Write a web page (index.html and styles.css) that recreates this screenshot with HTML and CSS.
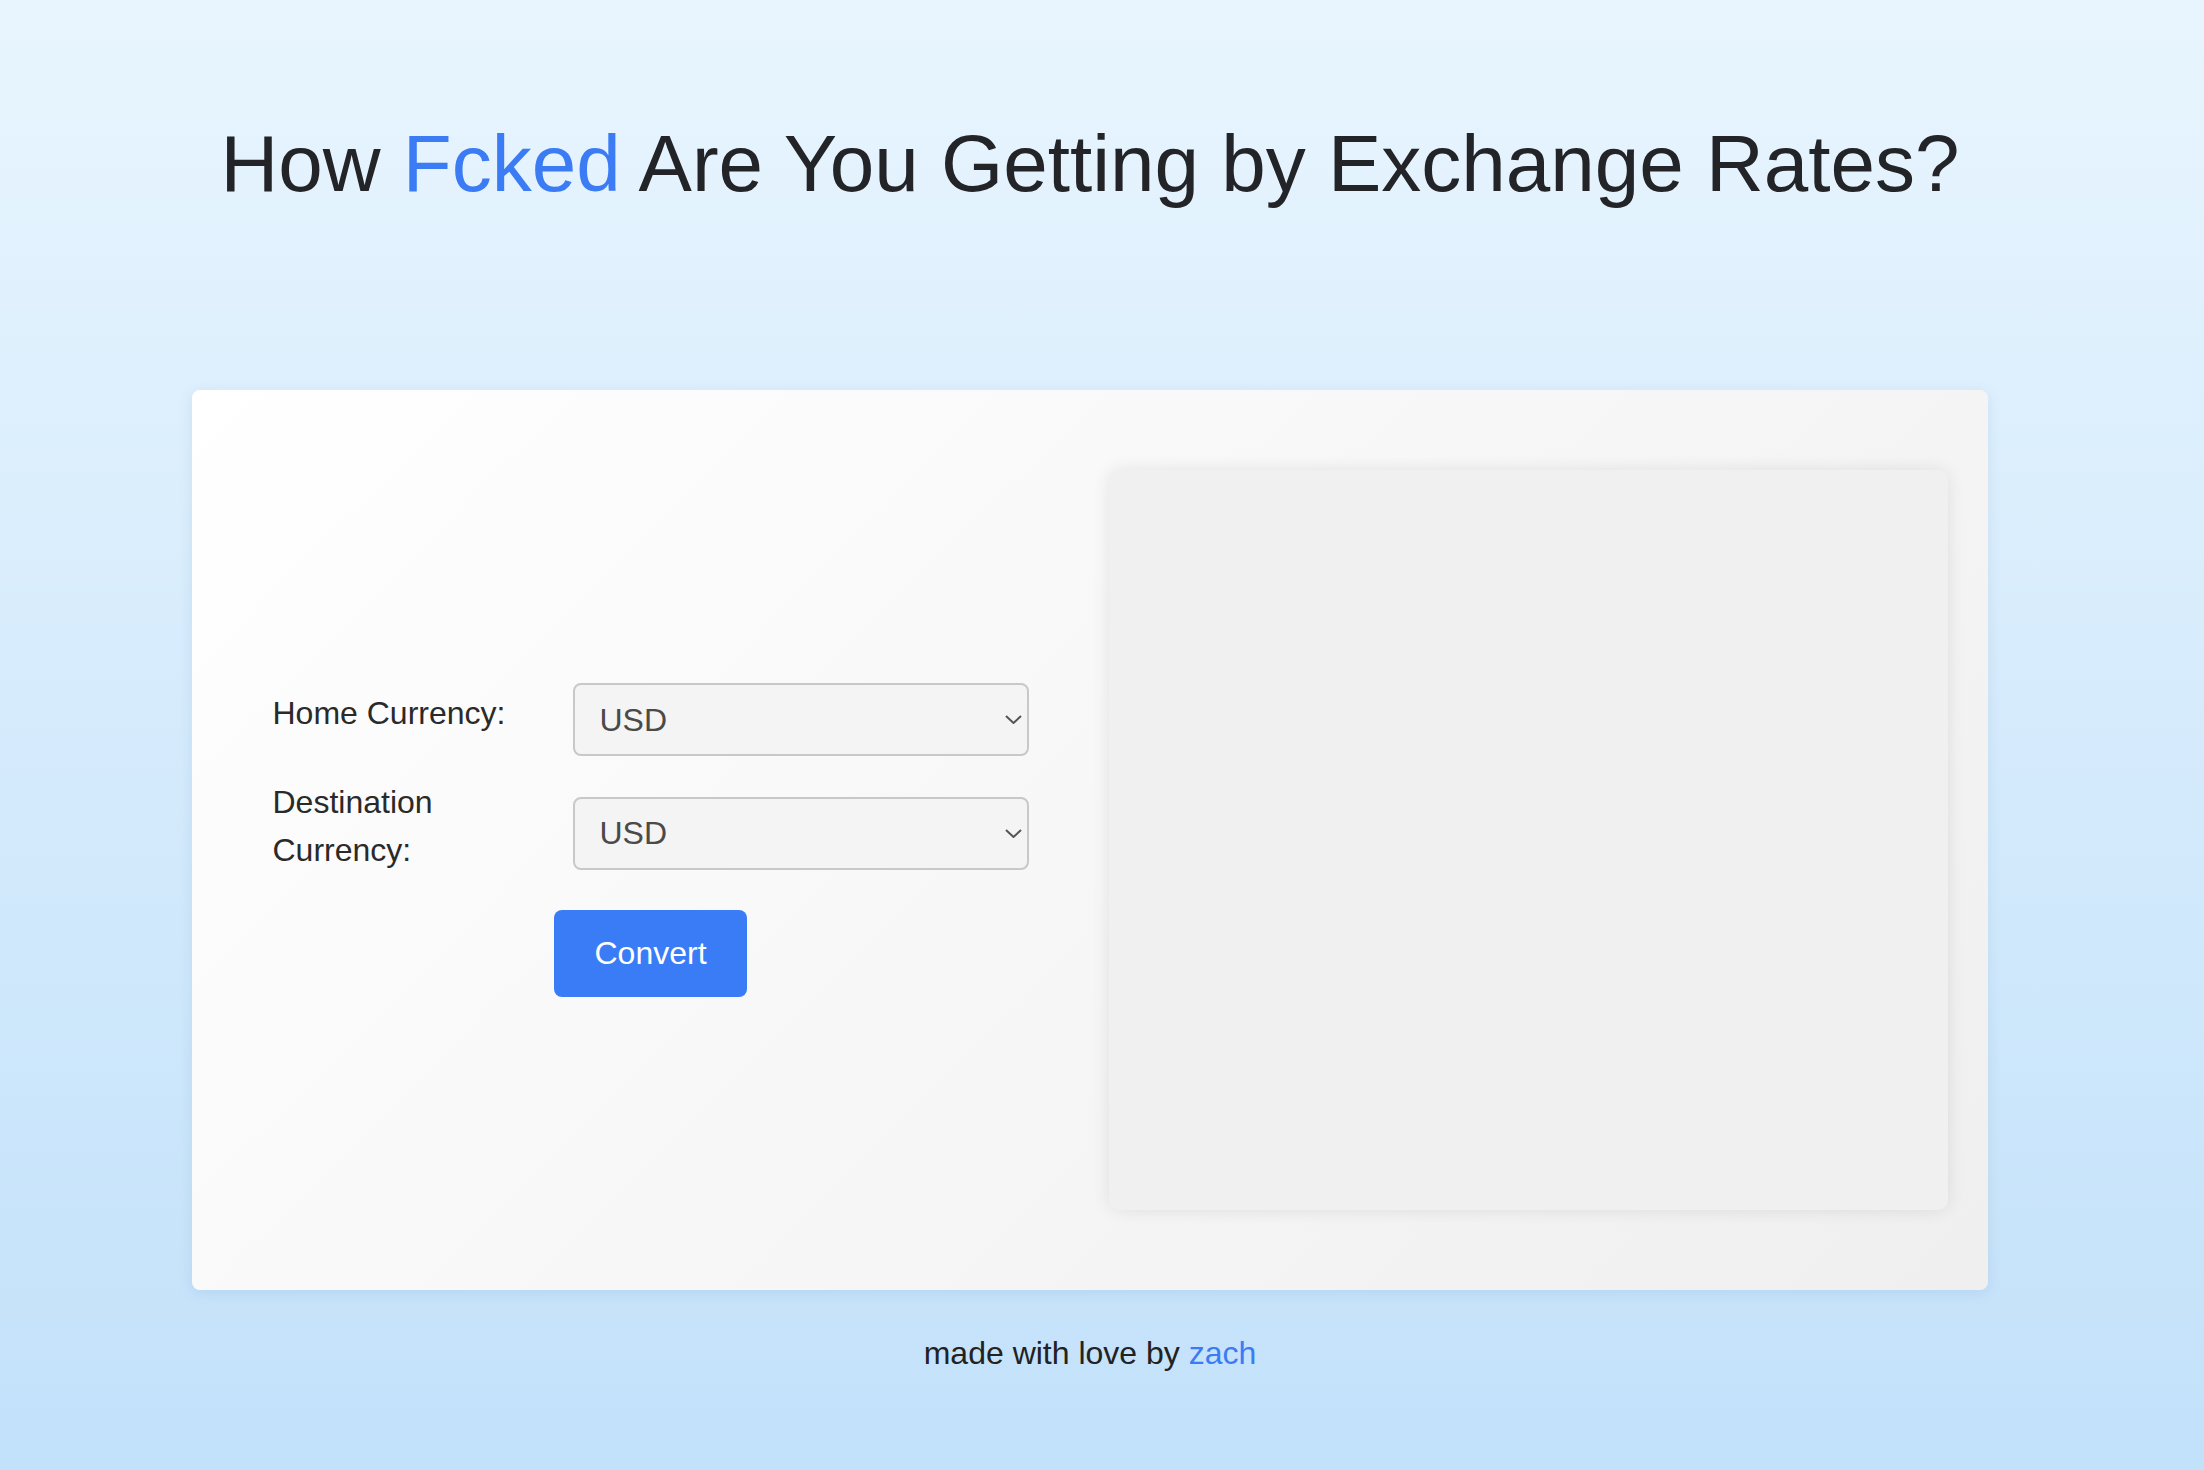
FILE: index.html
```html
<!DOCTYPE html>
<html lang="en">
<head>
    <meta charset="UTF-8">
    <title>How Fcked Are You Getting by Exchange Rates?</title>
    <link rel="stylesheet" href="styles.css">
</head>
<body>
    <div class="page">
        <h1>How <span class="accent">Fcked</span> Are You Getting by Exchange Rates?</h1>
        <div class="card">
            <div class="form-col">
                <form class="form" onsubmit="return false;">
                    <div class="field">
                        <label for="home">Home Currency:</label>
                        <div class="select-wrap">
                            <select id="home">
                                <option>USD</option>
                                <option>EUR</option>
                                <option>GBP</option>
                                <option>JPY</option>
                            </select>
                            <svg class="chevron" viewBox="0 0 17 9"><path d="M1 1l7.5 7 7.5-7"/></svg>
                        </div>
                    </div>
                    <div class="field">
                        <label for="dest">Destination Currency:</label>
                        <div class="select-wrap">
                            <select id="dest">
                                <option>USD</option>
                                <option>EUR</option>
                                <option>GBP</option>
                                <option>JPY</option>
                            </select>
                            <svg class="chevron" viewBox="0 0 17 9"><path d="M1 1l7.5 7 7.5-7"/></svg>
                        </div>
                    </div>
                    <button class="btn-convert" type="submit">Convert</button>
                </form>
            </div>
            <div class="result"></div>
        </div>
        <p class="footer">made with love by <a href="#">zach</a></p>
    </div>
</body>
</html>
```

FILE: styles.css
```css
html, body {
    margin: 0;
    height: 100%;
}
body {
    background: linear-gradient(to bottom, #e8f5fe, #c2e1fa);
    font-family: "Liberation Sans", Arial, sans-serif;
    color: #222;
}
.page {
    padding: 118px 24px 0 0;
}
h1 {
    margin: 0;
    text-align: center;
    font-size: 80px;
    font-weight: normal;
    line-height: 92px;
    color: #222428;
}
.accent {
    color: #3b7cf5;
}
.card {
    width: 1796px;
    height: 900px;
    box-sizing: border-box;
    margin: 180px auto 0;
    padding: 80px 40px 80px 0;
    display: flex;
    border-radius: 8px;
    background: linear-gradient(135deg, #ffffff, #efefef);
    box-shadow: 0 3px 14px rgba(60, 110, 160, 0.12);
}
.form-col {
    flex: 1;
    display: flex;
    align-items: center;
    justify-content: center;
}
.form {
    width: 756px;
    display: flex;
    flex-direction: column;
    row-gap: 22px;
}
.field {
    display: flex;
    align-items: center;
    column-gap: 40px;
}
.field label {
    width: 260px;
    font-size: 32px;
    line-height: 48px;
    padding-bottom: 14px;
    color: #2a2a2a;
}
.select-wrap {
    position: relative;
}
.select-wrap select {
    width: 456px;
    height: 73px;
    box-sizing: border-box;
    appearance: none;
    -webkit-appearance: none;
    border: 2px solid #c8c8c8;
    border-radius: 8px;
    background: #f4f4f4;
    padding: 0 0 0 25px;
    font-family: inherit;
    font-size: 32px;
    color: #4a4a4a;
}
.chevron {
    position: absolute;
    right: 7px;
    top: 32px;
    width: 17px;
    height: 9px;
    fill: none;
    stroke: #555;
    stroke-width: 2;
}
.btn-convert {
    align-self: center;
    border: none;
    border-radius: 8px;
    background: #3a7cf5;
    color: #fff;
    font-family: inherit;
    font-size: 32px;
    padding: 25px 40px;
    cursor: pointer;
}
.result {
    width: 839px;
    border-radius: 10px;
    background: #f0f0f0;
    box-shadow: 0 0 18px rgba(0, 0, 0, 0.09);
}
.footer {
    margin: 45px 0 0;
    text-align: center;
    font-size: 32px;
    color: #222;
}
.footer a {
    color: #3b7cf5;
    text-decoration: none;
}
```
